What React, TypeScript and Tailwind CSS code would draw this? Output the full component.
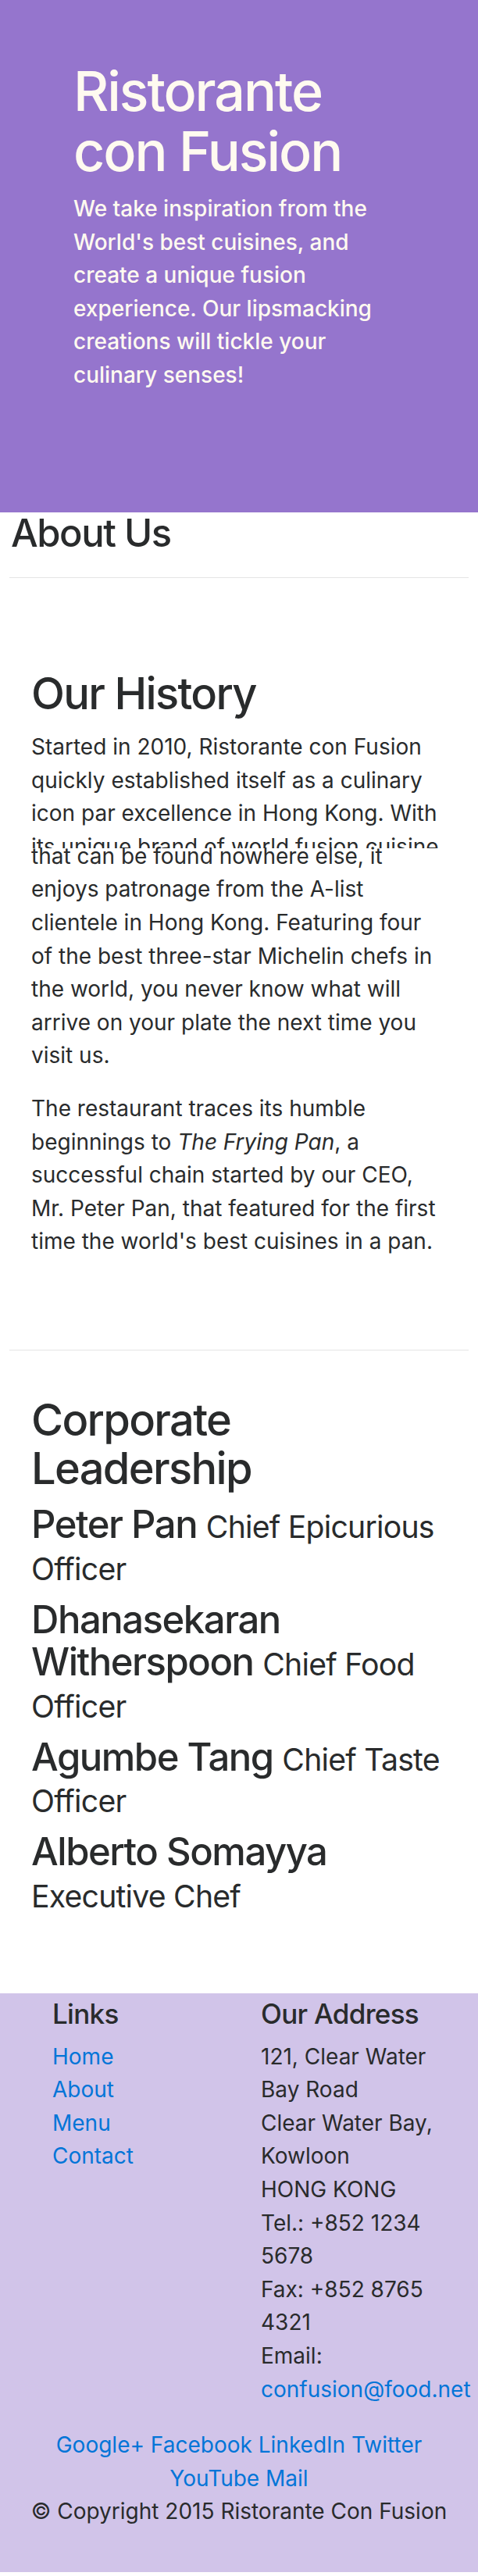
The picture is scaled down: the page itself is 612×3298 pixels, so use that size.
const historyLines = [
  'Started in 2010, Ristorante con Fusion',
  'quickly established itself as a culinary',
  'icon par excellence in Hong Kong. With',
];

const historyRest = [
  'enjoys patronage from the A-list',
  'clientele in Hong Kong. Featuring four',
  'of the best three-star Michelin chefs in',
  'the world, you never know what will',
  'arrive on your plate the next time you',
  'visit us.',
];

const leaders = [
  { name: 'Peter Pan', title: 'Chief Epicurious Officer' },
  { name: 'Dhanasekaran Witherspoon', title: 'Chief Food Officer' },
  { name: 'Agumbe Tang', title: 'Chief Taste Officer' },
  { name: 'Alberto Somayya', title: 'Executive Chef' },
];

const addressLines = [
  '121, Clear Water',
  'Bay Road',
  'Clear Water Bay,',
  'Kowloon',
  'HONG KONG',
  'Tel.: +852 1234',
  '5678',
  'Fax: +852 8765',
  '4321',
  'Email:',
];

function Jumbotron() {
  return (
    <header className="bg-[#9575cd] text-[#fffaf0] pt-[78px] pb-[126px] pl-[94px] pr-[94px]">
      <h1 className="text-[70px] leading-[1.1] font-medium mb-[14px] tracking-[-0.03em]">
        Ristorante con Fusion
      </h1>
      <p className="font-medium mb-[28px]">
        We take inspiration from the World's best cuisines, and create a unique fusion experience. Our
        lipsmacking creations will tickle your culinary senses!
      </p>
    </header>
  );
}

function OurHistory() {
  return (
    <section className="border-b border-black/10 pt-[118px] pb-[117px] px-7">
      <h2 className="text-[56px] leading-[1.1] font-medium mb-[15px] tracking-[-0.03em]">Our History</h2>
      <p className="whitespace-nowrap mb-[25px]">
        {historyLines.map((line) => (
          <span key={line} className="block">{line}</span>
        ))}
        {/* seam in the captured page: this line is cut and the next one slides over it */}
        <span className="block h-[23px] overflow-hidden">its unique brand of world fusion cuisine</span>
        <span className="block -mt-[11px]">that can be found nowhere else, it</span>
        {historyRest.map((line) => (
          <span key={line} className="block">{line}</span>
        ))}
      </p>
      <p className="whitespace-nowrap">
        <span className="block">The restaurant traces its humble</span>
        <span className="block">
          beginnings to <em>The Frying Pan</em>, a
        </span>
        <span className="block">successful chain started by our CEO,</span>
        <span className="block">Mr. Peter Pan, that featured for the first</span>
        <span className="block">time the world's best cuisines in a pan.</span>
      </p>
    </section>
  );
}

function Leadership() {
  return (
    <section className="pt-[59px] pb-[86px] px-7">
      <h2 className="text-[56px] leading-[1.1] font-medium mb-[14px] w-[400px] tracking-[-0.03em]">
        Corporate Leadership
      </h2>
      {leaders.map((l) => (
        <h3 key={l.name} className="text-[49px] leading-[1.1] font-medium mb-[14px] tracking-[-0.03em]">
          {l.name} <small className="text-[80%] font-normal tracking-[-0.02em]">{l.title}</small>
        </h3>
      ))}
    </section>
  );
}

function Footer() {
  return (
    <footer className="bg-[#d1c4e9] pt-[7px] pb-[56px]">
      <div className="flex pl-[67px]">
        <div className="w-[267px]">
          <h5 className="text-[35px] leading-[1.1] font-medium mb-[14px] tracking-[-0.02em]">Links</h5>
          <ul>
            {['Home', 'About', 'Menu', 'Contact'].map((link) => (
              <li key={link}>
                <a href="#" className="text-[#0275d8]">{link}</a>
              </li>
            ))}
          </ul>
        </div>
        <div className="flex-1">
          <h5 className="text-[35px] leading-[1.1] font-medium mb-[14px] tracking-[-0.02em]">Our Address</h5>
          <address className="not-italic whitespace-nowrap">
            {addressLines.map((line) => (
              <span key={line} className="block">{line}</span>
            ))}
            <a href="#" className="block text-[#0275d8]">confusion@food.net</a>
          </address>
        </div>
      </div>
      <div className="text-center px-16 pt-[29px]">
        {['Google+', 'Facebook', 'LinkedIn', 'Twitter', 'YouTube', 'Mail'].map((s) => (
          <span key={s}>
            <a href="#" className="text-[#0275d8]">{s}</a>{' '}
          </span>
        ))}
      </div>
      <p className="text-center">© Copyright 2015 Ristorante Con Fusion</p>
    </footer>
  );
}

export default function App() {
  return (
    <div className="bg-white text-[#292b2c] text-[28px] leading-[42.6px] font-[Inter,'Noto_Sans',sans-serif]">
      <Jumbotron />
      <main className="px-3">
        <h3 className="text-[49px] leading-[1.1] font-medium pl-[2px] tracking-[-0.03em]">About Us</h3>
        <hr className="mt-[30px] border-black/10" />
        <OurHistory />
        <Leadership />
      </main>
      <Footer />
    </div>
  );
}
